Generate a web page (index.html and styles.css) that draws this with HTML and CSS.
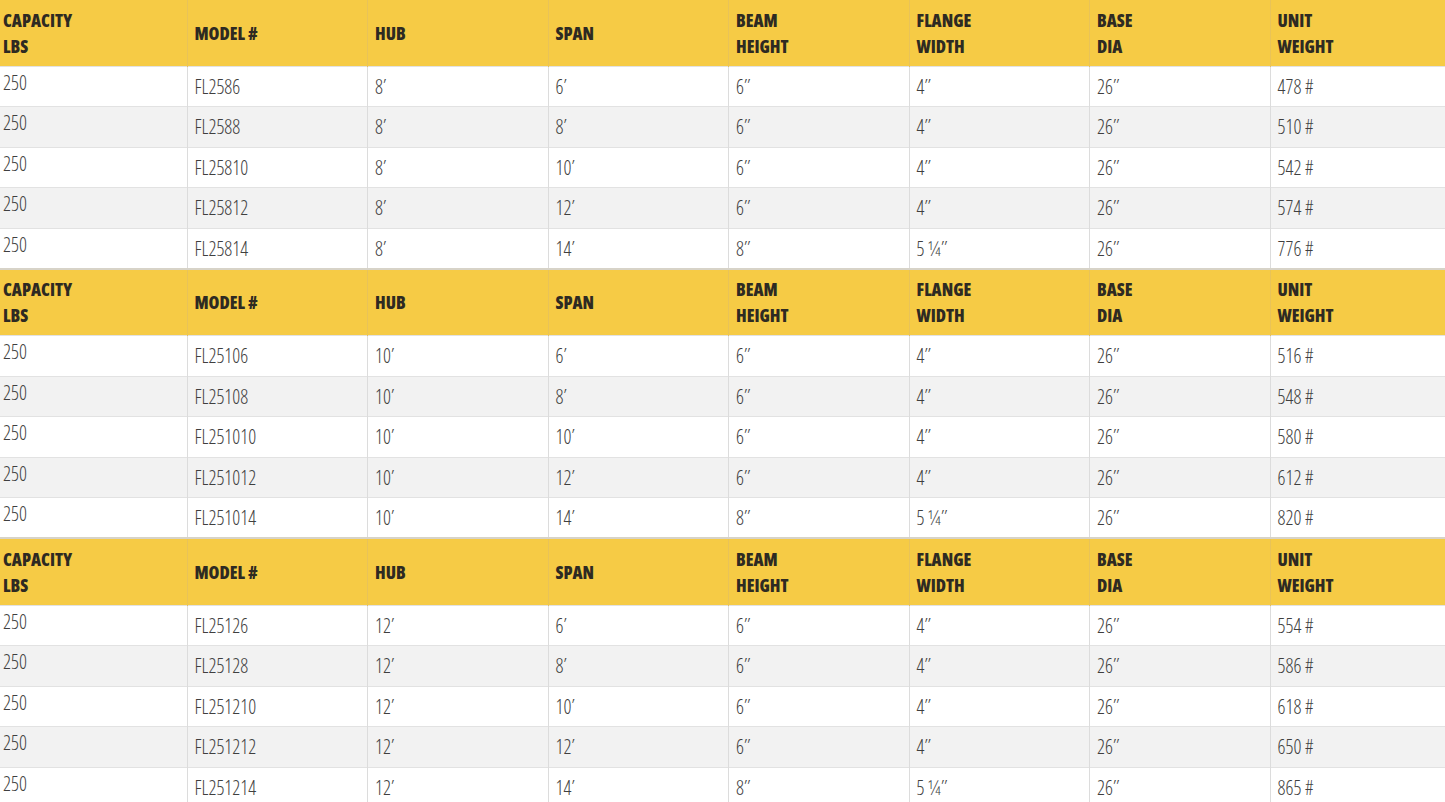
FILE: index.html
```html
<!DOCTYPE html>
<html>
<head>
<meta charset="utf-8">
<link rel="stylesheet" href="styles.css">
</head>
<body>
<table class="spec">
<colgroup>
<col class="c1"><col class="cn"><col class="cn"><col class="cn"><col class="cn"><col class="cn"><col class="cn"><col class="cl">
</colgroup>
<tbody>
<tr class="head"><th>CAPACITY<br>LBS</th><th>MODEL #</th><th>HUB</th><th>SPAN</th><th>BEAM<br>HEIGHT</th><th>FLANGE<br>WIDTH</th><th>BASE<br>DIA</th><th>UNIT<br>WEIGHT</th></tr>
<tr class="odd"><td>250</td><td>FL2586</td><td>8′</td><td>6′</td><td>6″</td><td>4″</td><td>26″</td><td>478 #</td></tr>
<tr class="even"><td>250</td><td>FL2588</td><td>8′</td><td>8′</td><td>6″</td><td>4″</td><td>26″</td><td>510 #</td></tr>
<tr class="odd"><td>250</td><td>FL25810</td><td>8′</td><td>10′</td><td>6″</td><td>4″</td><td>26″</td><td>542 #</td></tr>
<tr class="even"><td>250</td><td>FL25812</td><td>8′</td><td>12′</td><td>6″</td><td>4″</td><td>26″</td><td>574 #</td></tr>
<tr class="odd"><td>250</td><td>FL25814</td><td>8′</td><td>14′</td><td>8″</td><td>5 ¼″</td><td>26″</td><td>776 #</td></tr>
<tr class="head"><th>CAPACITY<br>LBS</th><th>MODEL #</th><th>HUB</th><th>SPAN</th><th>BEAM<br>HEIGHT</th><th>FLANGE<br>WIDTH</th><th>BASE<br>DIA</th><th>UNIT<br>WEIGHT</th></tr>
<tr class="odd"><td>250</td><td>FL25106</td><td>10′</td><td>6′</td><td>6″</td><td>4″</td><td>26″</td><td>516 #</td></tr>
<tr class="even"><td>250</td><td>FL25108</td><td>10′</td><td>8′</td><td>6″</td><td>4″</td><td>26″</td><td>548 #</td></tr>
<tr class="odd"><td>250</td><td>FL251010</td><td>10′</td><td>10′</td><td>6″</td><td>4″</td><td>26″</td><td>580 #</td></tr>
<tr class="even"><td>250</td><td>FL251012</td><td>10′</td><td>12′</td><td>6″</td><td>4″</td><td>26″</td><td>612 #</td></tr>
<tr class="odd"><td>250</td><td>FL251014</td><td>10′</td><td>14′</td><td>8″</td><td>5 ¼″</td><td>26″</td><td>820 #</td></tr>
<tr class="head"><th>CAPACITY<br>LBS</th><th>MODEL #</th><th>HUB</th><th>SPAN</th><th>BEAM<br>HEIGHT</th><th>FLANGE<br>WIDTH</th><th>BASE<br>DIA</th><th>UNIT<br>WEIGHT</th></tr>
<tr class="odd"><td>250</td><td>FL25126</td><td>12′</td><td>6′</td><td>6″</td><td>4″</td><td>26″</td><td>554 #</td></tr>
<tr class="even"><td>250</td><td>FL25128</td><td>12′</td><td>8′</td><td>6″</td><td>4″</td><td>26″</td><td>586 #</td></tr>
<tr class="odd"><td>250</td><td>FL251210</td><td>12′</td><td>10′</td><td>6″</td><td>4″</td><td>26″</td><td>618 #</td></tr>
<tr class="even"><td>250</td><td>FL251212</td><td>12′</td><td>12′</td><td>6″</td><td>4″</td><td>26″</td><td>650 #</td></tr>
<tr class="odd"><td>250</td><td>FL251214</td><td>12′</td><td>14′</td><td>8″</td><td>5 ¼″</td><td>26″</td><td>865 #</td></tr>
</tbody>
</table>
</body>
</html>
```
FILE: styles.css
```css
html, body {
  margin: 0;
  padding: 0;
  background: #ffffff;
}
.spec {
  width: 1445px;
  table-layout: fixed;
  border-collapse: collapse;
  border-spacing: 0;
  font-family: "Open Sans", "DejaVu Sans Condensed", sans-serif;
  font-stretch: 75%;
}
.c1 { width: 187px; }
.cn { width: 180.5px; }
.cl { width: 175px; }
.spec th, .spec td {
  padding: 0 0 0 7px;
  text-align: left;
  vertical-align: middle;
  box-sizing: border-box;
}
.spec th:first-child, .spec td:first-child {
  padding-left: 3px;
}
.head th {
  background: #f6cb45;
  color: #2e2a22;
  font-weight: 800;
  font-size: 17.5px;
  line-height: 26px;
  height: 67px;
  border-top: 2px solid #d7d3c8;
  border-left: 1px solid #e9c358;
}
.head:first-child th {
  border-top: none;
  height: 66px;
}
.spec td {
  color: #3f3f3f;
  font-size: 19.5px;
  font-weight: 300;
  height: 40.5px;
  border-top: 1px solid #e2e2e2;
  border-left: 1px solid #dcdcdc;
}
.spec td:first-child {
  padding-bottom: 8px;
}
.head th:first-child, .spec td:first-child {
  border-left: none;
}
.odd td { background: #ffffff; }
.even td { background: #f2f2f2; }
```
